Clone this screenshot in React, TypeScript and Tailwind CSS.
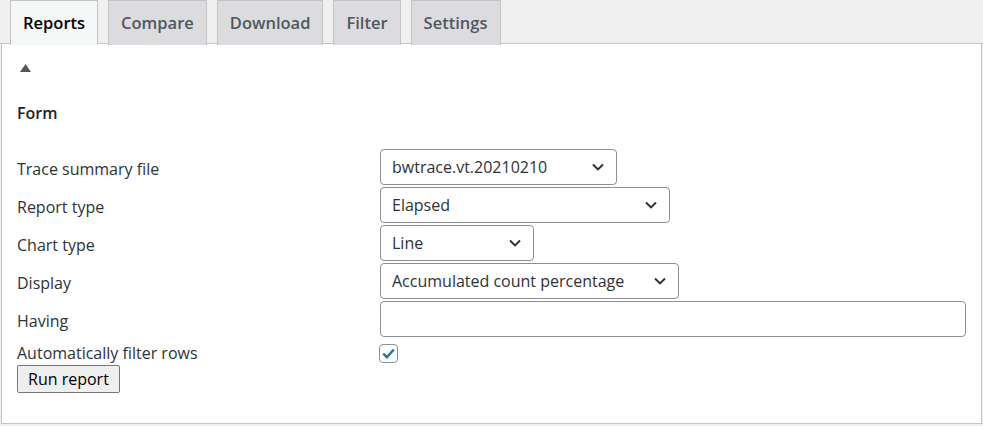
import { useState } from "react";

const tabs = ["Reports", "Compare", "Download", "Filter", "Settings"];

function Chevron() {
  return (
    <svg width="16" height="16" viewBox="0 0 16 16" className="shrink-0">
      <path d="M3 5.5 8 10.4l5-4.9" fill="none" stroke="#2c3338" strokeWidth="2" />
    </svg>
  );
}

function Select({ value, width }: { value: string; width: string }) {
  return (
    <div
      className={`${width} h-[36px] flex items-center justify-between pl-[11px] pr-[10px] border border-[#8c8f94] rounded-[4px] bg-white text-[#2c3338]`}
    >
      <span>{value}</span>
      <Chevron />
    </div>
  );
}

export default function App() {
  const [active] = useState("Reports");
  return (
    <div
      className="w-[983px] h-[426px] bg-[#f0f0f1] overflow-hidden text-[16px] text-[#1d2327]"
      style={{ fontFamily: '"Open Sans", "Noto Sans", sans-serif' }}
    >
      {/* tabs */}
      <nav className="flex gap-[10px] pl-[10px] h-[44px] border-b border-[#c3c4c7]">
        {tabs.map((t) => (
          <div
            key={t}
            className={`h-[45px] px-[12px] flex items-center text-[16.5px] font-semibold border border-b-0 border-[#c3c4c7] ${
              t === active ? "bg-[#f6f7f7] text-[#000]" : "bg-[#dcdcde] text-[#50575e]"
            }`}
          >
            {t}
          </div>
        ))}
      </nav>

      {/* panel */}
      <div className="ml-[1px] w-[981px] h-[380px] bg-white border border-t-0 border-[#c3c4c7] pl-[15px] pt-[19px]">
        <svg width="13" height="10" viewBox="0 0 13 10" className="ml-[2px]">
          <path d="M1 9 6.5 1 12 9z" fill="#50575e" />
        </svg>
        <h2 className="mt-[28px] font-semibold text-[16px] text-[#1d2327]">Form</h2>

        <div className="mt-[24px] grid grid-cols-[363px_1fr] gap-y-[2px] text-[#2c3338]">
          <div className="flex items-center pt-[4px]">Trace summary file</div>
          <Select value="bwtrace.vt.20210210" width="w-[237px]" />

          <div className="flex items-center pt-[4px]">Report type</div>
          <Select value="Elapsed" width="w-[290px]" />

          <div className="flex items-center pt-[4px]">Chart type</div>
          <Select value="Line" width="w-[154px]" />

          <div className="flex items-center pt-[4px]">Display</div>
          <Select value="Accumulated count percentage" width="w-[299px]" />

          <div className="flex items-center pt-[4px]">Having</div>
          <div className="w-[586px] h-[36px] border border-[#8c8f94] rounded-[4px] bg-white" />

          <div className="flex items-center h-[26px] pt-[2px]">Automatically filter rows</div>
          <div className="flex items-center h-[26px] pt-[2px]">
            <div className="w-[19px] h-[19px] -ml-[1px] border border-[#8c8f94] rounded-[4px] flex items-center justify-center">
              <svg width="15" height="15" viewBox="0 0 16 16">
                <path d="M2.5 8.2 6.3 12 13.6 3.8" fill="none" stroke="#2271b1" strokeWidth="2.6" />
              </svg>
            </div>
          </div>
        </div>

        <button className="mt-0 h-[28px] px-[10px] bg-[#efefef] border border-[#767676] rounded-[2px] text-[16px] text-black">
          Run report
        </button>
      </div>
    </div>
  );
}
